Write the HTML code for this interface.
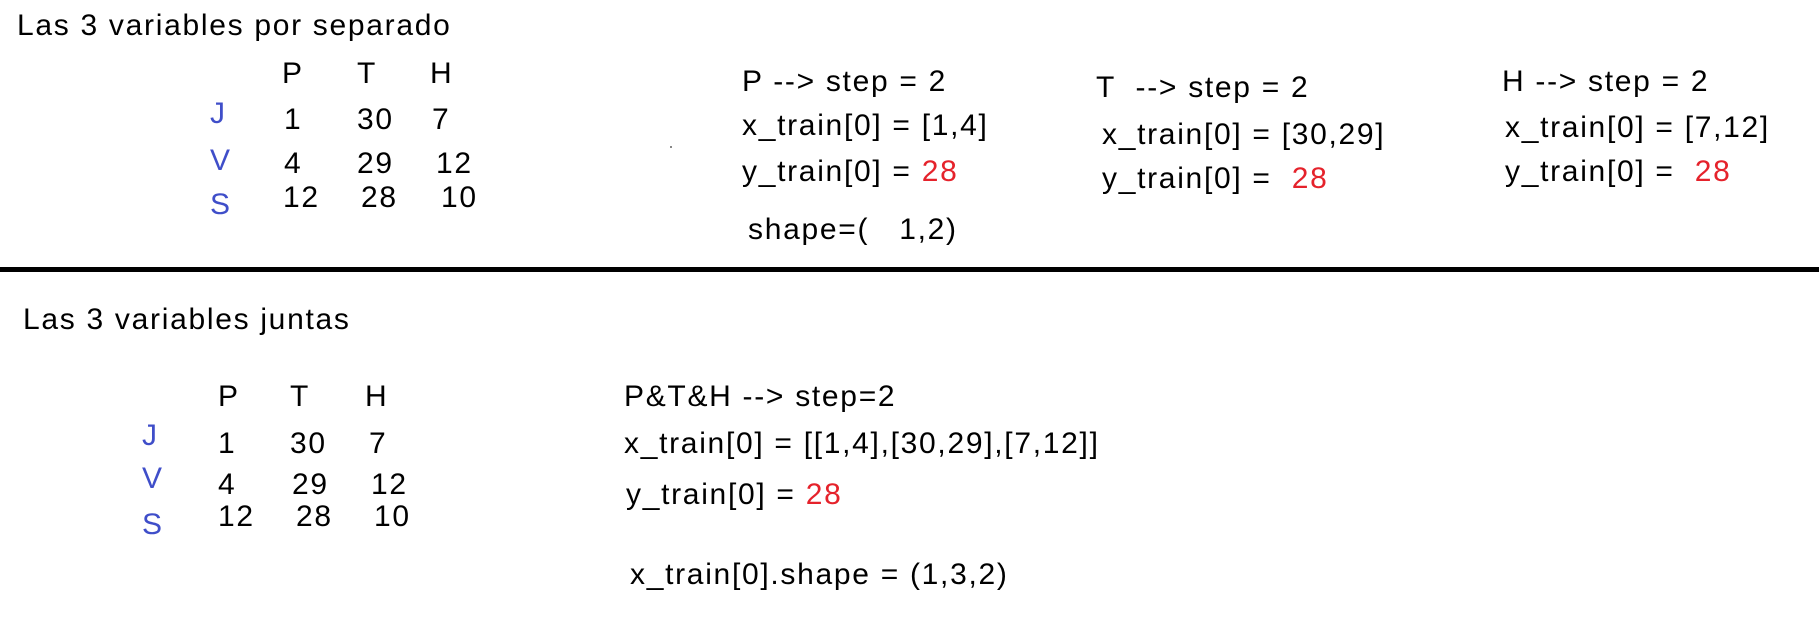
<!DOCTYPE html>
<html><head><meta charset="utf-8"><style>
html,body{margin:0;padding:0;background:#fff;width:1819px;height:637px;overflow:hidden;position:relative}
span{position:absolute;font-family:"Liberation Sans",sans-serif;font-size:30px;line-height:1;color:#000;white-space:pre;letter-spacing:1.7px;margin-top:-2px}
span span{margin-top:0}
.b{color:#3f4ec9}
.r{color:#e5222b}
#line{position:absolute;left:0;top:267px;width:1819px;height:5px;background:#000}
</style></head><body>
<span style="left:17px;top:13px">Las 3 variables por separado</span>
<span style="left:282px;top:61px">P</span><span style="left:357px;top:61px">T</span><span style="left:430px;top:61px">H</span>
<span class="b" style="left:210px;top:101px">J</span>
<span style="left:284px;top:107px">1</span><span style="left:357px;top:107px">30</span><span style="left:432px;top:107px">7</span>
<span class="b" style="left:210px;top:148px">V</span>
<span style="left:284px;top:151px">4</span><span style="left:357px;top:151px">29</span><span style="left:436px;top:151px">12</span>
<span class="b" style="left:210px;top:192px">S</span>
<span style="left:283px;top:185px">12</span><span style="left:361px;top:185px">28</span><span style="left:441px;top:185px">10</span>
<div style="position:absolute;left:670px;top:146px;width:2px;height:2px;background:#888"></div>
<span style="left:742px;top:69px">P --&gt; step = 2</span>
<span style="left:742px;top:113px">x_train[0] = [1,4]</span>
<span style="left:742px;top:159px">y_train[0] = <span class="r" style="position:static">28</span></span>
<span style="left:748px;top:217px">shape=(   1,2)</span>
<span style="left:1096px;top:75px">T  --&gt; step = 2</span>
<span style="left:1102px;top:122px">x_train[0] = [30,29]</span>
<span style="left:1102px;top:166px">y_train[0] =  <span class="r" style="position:static">28</span></span>
<span style="left:1502px;top:69px">H --&gt; step = 2</span>
<span style="left:1505px;top:115px">x_train[0] = [7,12]</span>
<span style="left:1505px;top:159px">y_train[0] =  <span class="r" style="position:static">28</span></span>
<div id="line"></div>
<span style="left:23px;top:307px">Las 3 variables juntas</span>
<span style="left:218px;top:384px">P</span><span style="left:290px;top:384px">T</span><span style="left:365px;top:384px">H</span>
<span class="b" style="left:142px;top:423px">J</span>
<span style="left:218px;top:431px">1</span><span style="left:290px;top:431px">30</span><span style="left:369px;top:431px">7</span>
<span class="b" style="left:142px;top:466px">V</span>
<span style="left:218px;top:472px">4</span><span style="left:292px;top:472px">29</span><span style="left:371px;top:472px">12</span>
<span class="b" style="left:142px;top:512px">S</span>
<span style="left:218px;top:504px">12</span><span style="left:296px;top:504px">28</span><span style="left:374px;top:504px">10</span>
<span style="left:624px;top:384px">P&amp;T&amp;H --&gt; step=2</span>
<span style="left:624px;top:431px">x_train[0] = [[1,4],[30,29],[7,12]]</span>
<span style="left:626px;top:482px">y_train[0] = <span class="r" style="position:static">28</span></span>
<span style="left:630px;top:562px">x_train[0].shape = (1,3,2)</span>
</body></html>
